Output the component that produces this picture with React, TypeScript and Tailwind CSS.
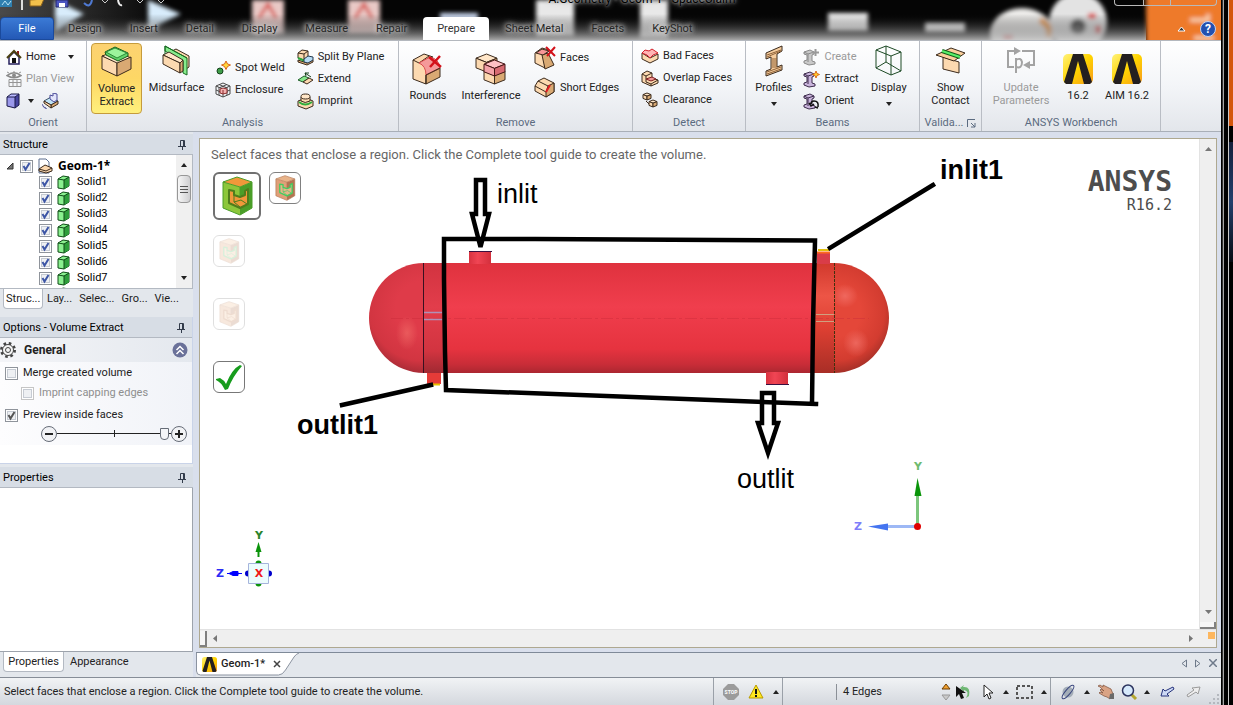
import { useState, type ReactNode } from 'react';

const TAN = '#fcd9b0';
const TAN_DARK = '#d9a973';
const INK = '#3b2a1c';

interface CubeProps {
  x?: number;
  y?: number;
  w: number;
  h: number;
  top?: string;
  left?: string;
  right?: string;
  stroke?: string;
}

// isometric block used by several ribbon icons
function Cube({ x = 0, y = 0, w, h, top = '#ffe6c8', left = TAN, right = TAN_DARK, stroke = INK }: CubeProps) {
  const q = w / 5;
  const m = x + w / 2;
  return (
    <g stroke={stroke} strokeLinejoin="round">
      <path d={`M${m} ${y}L${x + w} ${y + q}L${m} ${y + 2 * q}L${x} ${y + q}Z`} fill={top} />
      <path d={`M${x} ${y + q}L${m} ${y + 2 * q}V${y + h}L${x} ${y + h - q}Z`} fill={left} />
      <path d={`M${x + w} ${y + q}L${m} ${y + 2 * q}V${y + h}L${x + w} ${y + h - q}Z`} fill={right} />
    </g>
  );
}

function Svg({ w, h, children }: { w: number; h: number; children: ReactNode }) {
  return (
    <svg width={w} height={h} viewBox={`0 0 ${w} ${h}`} className="shrink-0" fill="none" aria-hidden="true">
      {children}
    </svg>
  );
}

function HomeIcon() {
  return (
    <Svg w={16} h={16}>
      <path d="M11 2h2v5h-2z" fill="#8c1c1c" />
      <path d="M3 8v7h10V8L8 3Z" fill="#fff" stroke="#26215e" strokeWidth="1.5" />
      <path d="M1 9L8 2l7 7" stroke="#4a4012" strokeWidth="2" />
      <path d="M6 9h4v5H6z" fill="#111" />
    </Svg>
  );
}

function PlanViewIcon() {
  return (
    <Svg w={16} h={16}>
      <path d="M1 4.500Q8-1 15 4.500Q8 9 1 4.500Z" stroke="#8a8a8a" strokeWidth="1.500" />
      <circle cx="8" cy="4.500" r="2" fill="#8a8a8a" />
      <path d="M3 8.500h12v7H3zM7 8v7M11 8v7M3 11.500h12M1 1l2 1M15 1l-2 1M8 0v1" stroke="#959595" />
    </Svg>
  );
}

function OrientCubeIcon() {
  return (
    <Svg w={14} h={16}>
      <path d="M1 4L5 1h8L9 4Z" fill="#b9b9ff" />
      <path d="M1 4h8v11L1 13Z" fill="#9a98ea" />
      <path d="M9 4l4-3v11l-4 3Z" fill="#45439e" />
      <path d="M1 4L5 1h8v11l-4 3-8-2ZM1 4h8v11M9 4l4-3" stroke="#1b1a4a" />
    </Svg>
  );
}

function SpinViewIcon() {
  return (
    <Svg w={17} h={16}>
      <path d="M2 8l7-4 7 4-7 4Z" fill="#bfe3f5" stroke="#3f556b" />
      <path d="M9 12l7-4v3l-7 4Z" fill={TAN_DARK} stroke={INK} />
      <path d="M2 8v2l7 5v-3Z" fill={TAN} stroke={INK} />
      <path d="M8 6V2l3 1V0l4 1v6l-3 2Z" fill="#e3e5fb" stroke="#4b4b99" />
      <path d="M0 11q1 4 5 5M1 13q2 2 3 2" stroke="#5b5da0" />
    </Svg>
  );
}

function VolumeExtractIcon() {
  return (
    <Svg w={32} h={32}>
      <g stroke={INK} strokeLinejoin="round">
        <path d="M1 10L15 5l15 7-14 6Z" fill="#ffe9cc" />
        <path d="M1 10l15 7v13L1 23Z" fill={TAN} />
        <path d="M30 11l-14 6v13l14-7Z" fill={TAN_DARK} />
      </g>
      <path d="M4 6L14 1l13 6v3l-10 5-12-6Z" fill="#63d56c" stroke="#155c1b" strokeLinejoin="round" />
      <path d="M5 6l9-4 12 5-10 5Z" fill="#9cf59c" stroke="#2c8a35" strokeLinejoin="round" />
    </Svg>
  );
}

function MidsurfaceIcon() {
  return (
    <Svg w={30} h={32}>
      <g stroke={INK} strokeLinejoin="round">
        <path d="M10 6l4-2 13 7v11l-3 2Z" fill={TAN} />
        <path d="M3 1l22 12v17l-4-2V16L3 6Z" fill="#86ec8c" stroke="#176a20" />
        <path d="M1 10l6-3 14 8-3 3Z" fill="#ffe6c8" />
        <path d="M1 10l17 8v10L1 19Z" fill={TAN} />
        <path d="M18 18l3-3v11l-3 2Z" fill={TAN_DARK} />
        <path d="M3 9V1l22 12" stroke="#176a20" />
      </g>
    </Svg>
  );
}

function SpotWeldIcon() {
  return (
    <Svg w={16} h={16}>
      <circle cx="5" cy="11" r="3" fill="#3f9d49" stroke="#14421a" />
      <path d="M11 1l1.500 3 3 1-3 1.500-1.500 3-1.500-3-3-1.500 3-1Z" fill="#ffd83a" stroke="#d8641c" />
    </Svg>
  );
}

function EnclosureIcon() {
  return (
    <Svg w={16} h={16}>
      <path d="M1 4l7-3 7 3v8l-7 3-7-3ZM1 4l7 3 7-3M8 7v8M4 2.500l7 3M12 2.500L5 5.500M4 5v8M12 5v8M1 8l7 3 7-3" stroke="#4a4a4a" />
      <path d="M5 7l3-1 4 1v4l-4 1-3-1Z" fill="#f3b1b1" stroke="#8c2f2f" />
      <path d="M8 8v4" stroke="#8c2f2f" />
    </Svg>
  );
}

function SplitIcon() {
  return (
    <Svg w={17} h={17}>
      <path d="M1 4l4-3 6 1v6l-4 3-6-2Z" fill={TAN} stroke={INK} />
      <path d="M1 4l6 1 4-3M7 5v5" stroke={INK} />
      <path d="M1 11l9 3 6-3v2l-6 3-9-3Z" fill={TAN_DARK} stroke={INK} />
      <path d="M1 9l7 3" stroke="#2ba43b" strokeWidth="2" />
      <path d="M7 10l4-3 5 1v3l-5 3-4-1Z" fill="#b8dcf4" stroke="#263b4f" />
    </Svg>
  );
}

function ExtendIcon() {
  return (
    <Svg w={17} h={16}>
      <path d="M1 9l6-4 5 2-6 4Z" fill="#86e78b" stroke="#215f2a" />
      <path d="M6 11l6-4 4 2-6 4Z" fill={TAN} stroke={INK} />
      <path d="M14 6L8 2m0 0h4M8 2l1 3" stroke="#17401c" />
    </Svg>
  );
}

function ImprintIcon() {
  return (
    <Svg w={17} h={17}>
      <path d="M1 8l8-3 7 3v5l-7 3-8-3Z" fill={TAN} stroke={INK} />
      <path d="M2 9q6 5 13 0" stroke="#2fae3e" strokeWidth="2" />
      <path d="M4 4v4q4 3 9 0V4" fill={TAN} stroke={INK} />
      <ellipse cx="8.500" cy="3.500" rx="4.500" ry="2.500" fill="#ffe6c8" stroke={INK} />
    </Svg>
  );
}

function RoundsIcon() {
  return (
    <Svg w={32} h={32}>
      <g stroke={INK} strokeLinejoin="round">
        <path d="M1 7l11-6 9 3-6 5-1 22L1 26Z" fill={TAN} />
        <path d="M1 7l6 3 10-7" />
        <path d="M14 31V22l14-7v9Z" fill={TAN_DARK} />
        <path d="M7 10q7 3 7 12l14-7Q27 6 18 4Z" fill="#f59a9a" stroke="#d84a4a" />
        <path d="M14 22v9M14 22l14-7" />
      </g>
      <path d="M17 4l12 10M28 3L18 14" stroke="#d3111a" strokeWidth="2.500" />
    </Svg>
  );
}

function InterferenceIcon() {
  return (
    <Svg w={32} h={32}>
      <Cube x={1} y={1} w={21} h={18} />
      <Cube x={9} y={14} w={21} h={17} />
      <Cube x={9} y={7} w={21} h={16} top="#ffc0c4" left="#f4a2a8" right="#d86a72" stroke="#451515" />
    </Svg>
  );
}

function FacesIcon() {
  return (
    <Svg w={22} h={24}>
      <g stroke={INK} strokeLinejoin="round">
        <path d="M1 7l7-5 7 2-5 6 1 12-10-5Z" fill={TAN} />
        <path d="M8 9l6-2 6 12-9 4Z" fill={TAN_DARK} />
        <path d="M2 7l6-4 7 2-6 4Z" fill="#f79797" />
      </g>
      <path d="M12 1l9 9M21 1l-8 9" stroke="#d3111a" strokeWidth="2" />
    </Svg>
  );
}

function ShortEdgesIcon() {
  return (
    <Svg w={22} h={22}>
      <g stroke={INK} strokeLinejoin="round">
        <path d="M1 9l3-5 6-3 10 5v9l-8 5-11-6Z" fill={TAN} />
        <path d="M12 15l2-6 6-3v9l-8 5Z" fill={TAN_DARK} />
        <path d="M1 9l11 6M4 4l10 5" />
      </g>
      <path d="M12 15l4-7" stroke="#e21b23" strokeWidth="2" />
    </Svg>
  );
}

function BadFacesIcon() {
  return (
    <Svg w={18} h={16}>
      <path d="M1 5l8 5 8-4v5l-8 4-8-4Z" fill={TAN} stroke={INK} />
      <path d="M1 5l3-3 4 1 3-2 6 4-5 2-3 3-3-3Z" fill="#ffb5b5" stroke="#d5202a" />
    </Svg>
  );
}

function OverlapIcon() {
  return (
    <Svg w={18} h={17}>
      <path d="M1 4l5-3 5 2v5l6 2v3l-7 3-9-4Z" fill={TAN} stroke={INK} />
      <path d="M1 4l4 2v6l5 2 7-4M5 6l6-3M10 14v2" stroke={INK} />
      <path d="M5 9l6-2 4 2-5 2Z" fill="#f19999" stroke="#802020" />
    </Svg>
  );
}

function ClearanceIcon() {
  return (
    <Svg w={18} h={16}>
      <Cube x={2} y={1} w={8} h={7} />
      <Cube x={8} y={8} w={8} h={7} />
      <path d="M5 9l3 3" stroke={INK} />
    </Svg>
  );
}

function ProfilesIcon() {
  return (
    <Svg w={20} h={32}>
      <path
        d="M2 8L18 1v5l-5 3v13l5-2v5L2 31v-5l5-2V12l-5 2Z"
        fill="#f6cd9e"
        stroke={INK}
        strokeLinejoin="round"
      />
      <path d="M3 10l14-5M3 12l14-6M8 14h5M8 16h5M8 18h5M8 20h5M8 22h5M3 27l14-5M3 29l14-5" stroke="#8f6238" />
    </Svg>
  );
}

function BeamIcon({ tone, mark }: { tone: string; mark: 'plus' | 'spark' | 'turn' }) {
  const edge = tone === '#c9c9c9' ? '#8a8a8a' : '#3c2b4b';
  return (
    <Svg w={17} h={17}>
      <path d="M1 3l6-2 4 2v2l-2 1v6l3 1v2l-6 1-5-2v-2l3-1V6L1 5Z" fill={tone} stroke={edge} strokeLinejoin="round" />
      <path d="M5 5v8M1 3l4 2 6-2" stroke={edge} />
      {mark === 'plus' && <path d="M12.500 0v7M9 3.500h7" stroke="#9a9a9a" strokeWidth="2" />}
      {mark === 'spark' && (
        <path d="M13 0l1 2.500 2.500 1-2.500 1-1 2.500-1-2.500-2.500-1 2.500-1Z" fill="#ffd02e" stroke="#db6b17" />
      )}
      {mark === 'turn' && <path d="M15 14q1-6-4-6-3 0-3 3m-2-1l2 3 3-2M15 15l-3-1" stroke="#111" strokeWidth="1.500" />}
    </Svg>
  );
}

function DisplayIcon() {
  return (
    <Svg w={28} h={32}>
      <path
        d="M1 5L11 1l15 6v19l-10 4L1 23ZM1 5l15 6 10-4M16 11v19M11 1v16L1 23M11 17l15 9"
        stroke="#1d4a25"
        strokeLinejoin="round"
      />
    </Svg>
  );
}

function ShowContactIcon() {
  return (
    <Svg w={32} h={28}>
      <g stroke={INK} strokeLinejoin="round">
        <path d="M8 10l16 5v11L8 22Z" fill={TAN} />
        <path d="M1 8l15-7 14 5-11 8Z" fill="#fbcf9c" />
      </g>
      <path d="M7 4l18 6" stroke="#135e1a" strokeWidth="4" />
      <path d="M7 4l18 6" stroke="#5af06a" strokeWidth="2" />
    </Svg>
  );
}

function UpdateIcon() {
  return (
    <Svg w={30} h={28}>
      <path d="M8 20H2V4h8M16 4h12v14h-6" stroke="#a3a3a3" strokeWidth="2" />
      <path d="M8 0l7 4-7 4ZM24 14v8l-7-4Z" fill="#a3a3a3" />
      <path d="M10 26V11M10 13q5-3 6 2 0 7-6 5" stroke="#a3a3a3" strokeWidth="2" />
    </Svg>
  );
}

function AnsysLogo({ size }: { size: number }) {
  return (
    <svg width={size} height={size} viewBox="0 0 30 30" className="shrink-0" aria-hidden="true">
      <defs>
        <linearGradient id="ansysGold" x1="0" y1="0" x2="1" y2="1">
          <stop offset="0" stopColor="#fff27a" />
          <stop offset="0.500" stopColor="#ffd400" />
          <stop offset="1" stopColor="#f79a1c" />
        </linearGradient>
      </defs>
      <rect width="30" height="30" rx="5" fill="url(#ansysGold)" />
      <path d="M10 0h10l9 28-2 2h-6L15 7 9 30H3l-2-2Z" fill="#231f20" />
    </svg>
  );
}

function Caret({ up = false }: { up?: boolean }) {
  return (
    <Svg w={6} h={4}>
      <path d={up ? 'M0 4h6L3 0Z' : 'M0 0h6L3 4Z'} fill="#222" />
    </Svg>
  );
}

interface SmallButtonProps {
  icon: ReactNode;
  label: string;
  caret?: boolean;
  disabled?: boolean;
}

function SmallButton({ icon, label, caret, disabled }: SmallButtonProps) {
  return (
    <button disabled={disabled} className="flex h-[22px] items-center gap-1 whitespace-nowrap disabled:text-[#9a9a9a]">
      {icon}
      <span>{label}</span>
      {caret && <span className="pl-2"><Caret /></span>}
    </button>
  );
}

interface LargeButtonProps {
  icon: ReactNode;
  label: string;
  caret?: boolean;
  disabled?: boolean;
  className?: string;
}

function LargeButton({ icon, label, caret, disabled, className = '' }: LargeButtonProps) {
  return (
    <button
      disabled={disabled}
      className={`flex flex-col items-center whitespace-pre-line leading-[13px] disabled:text-[#9a9a9a] ${className}`}
    >
      <span className="flex h-9 items-center">{icon}</span>
      <span className="pt-[2px]">{label}</span>
      {caret && <span className="pt-2"><Caret /></span>}
    </button>
  );
}

function RibbonGroup({ title, width, launcher, children }: { title: string; width: string; launcher?: boolean; children: ReactNode }) {
  return (
    <section className={`flex shrink-0 flex-col border-r border-[#b9bdc4] ${width}`}>
      <div className="flex h-[74px] pt-[2px]">{children}</div>
      <div className="flex items-center justify-center gap-1 pt-px text-[#5b6b80]">
        {title}
        {launcher && (
          <button aria-label="Validation options">
            <Svg w={9} h={9}>
              <path d="M0.500 8V0.500H8M4 4l4 4M8 4v4H4" stroke="#5b6b80" />
            </Svg>
          </button>
        )}
      </div>
    </section>
  );
}

function Ribbon() {
  return (
    <div className="flex h-[91px] border-b border-[#a9afb8] bg-gradient-to-b from-white via-[#f3f5f8] to-[#e3e6eb]">
      <RibbonGroup title="Orient" width="w-[87px]">
        <div className="pt-[3px] pl-[6px]">
          <SmallButton icon={<HomeIcon />} label="Home" caret />
          <SmallButton icon={<PlanViewIcon />} label="Plan View" disabled />
          <div className="flex h-[22px] items-center gap-2">
            <button aria-label="Orient view" className="flex items-center gap-2">
              <OrientCubeIcon />
              <Caret />
            </button>
            <button aria-label="Spin view"><SpinViewIcon /></button>
          </div>
        </div>
      </RibbonGroup>

      <RibbonGroup title="Analysis" width="w-[312px]">
        <LargeButton
          icon={<VolumeExtractIcon />}
          label={'Volume\nExtract'}
          className="ml-1 h-[71px] w-[51px] rounded-sm border border-[#c59b3c] bg-gradient-to-b from-[#fcd271] via-[#fdd765] to-[#fff07d]"
        />
        <LargeButton icon={<MidsurfaceIcon />} label="Midsurface" className="w-[69px]" />
        <div className="pt-[14px] pl-1">
          <SmallButton icon={<SpotWeldIcon />} label="Spot Weld" />
          <SmallButton icon={<EnclosureIcon />} label="Enclosure" />
        </div>
        <div className="pt-[3px] pl-3">
          <SmallButton icon={<SplitIcon />} label="Split By Plane" />
          <SmallButton icon={<ExtendIcon />} label="Extend" />
          <SmallButton icon={<ImprintIcon />} label="Imprint" />
        </div>
      </RibbonGroup>

      <RibbonGroup title="Remove" width="w-[234px]">
        <LargeButton icon={<RoundsIcon />} label="Rounds" className="w-[58px] pt-2" />
        <LargeButton icon={<InterferenceIcon />} label="Interference" className="w-[68px] pt-2" />
        <div className="flex flex-col gap-2 pt-1 pl-[9px]">
          <SmallButton icon={<FacesIcon />} label="Faces" />
          <SmallButton icon={<ShortEdgesIcon />} label="Short Edges" />
        </div>
      </RibbonGroup>

      <RibbonGroup title="Detect" width="w-[113px]">
        <div className="flex flex-col pt-[2px] pl-2">
          <SmallButton icon={<BadFacesIcon />} label="Bad Faces" />
          <SmallButton icon={<OverlapIcon />} label="Overlap Faces" />
          <SmallButton icon={<ClearanceIcon />} label="Clearance" />
        </div>
      </RibbonGroup>

      <RibbonGroup title="Beams" width="w-[174px]">
        <LargeButton icon={<ProfilesIcon />} label="Profiles" caret className="w-[57px]" />
        <div className="pt-[3px] pl-[2px]">
          <SmallButton icon={<BeamIcon tone="#c9c9c9" mark="plus" />} label="Create" disabled />
          <SmallButton icon={<BeamIcon tone="#c9b4dc" mark="spark" />} label="Extract" />
          <SmallButton icon={<BeamIcon tone="#c9b4dc" mark="turn" />} label="Orient" />
        </div>
        <LargeButton icon={<DisplayIcon />} label="Display" caret className="w-[62px]" />
      </RibbonGroup>

      <RibbonGroup title="Valida..." width="w-[62px]" launcher>
        <LargeButton icon={<ShowContactIcon />} label={'Show\nContact'} className="w-full" />
      </RibbonGroup>

      <RibbonGroup title="ANSYS Workbench" width="w-[179px]">
        <LargeButton icon={<UpdateIcon />} label={'Update\nParameters'} disabled className="w-[78px]" />
        <LargeButton icon={<AnsysLogo size={30} />} label="16.2" className="w-[36px] pt-2" />
        <LargeButton icon={<AnsysLogo size={30} />} label="AIM 16.2" className="w-[62px] pt-2" />
      </RibbonGroup>
    </div>
  );
}

// blurred desktop showing through the glass title bar
function GlassBackdrop() {
  return (
    <svg className="absolute inset-0 h-full w-full" aria-hidden="true">
      <defs>
        <linearGradient id="glass" x1="0" y1="0" x2="0" y2="1">
          <stop offset="0.350" stopColor="#0a0a0a" stopOpacity="0" />
          <stop offset="1" stopColor="#c4c4c4" stopOpacity="0.850" />
        </linearGradient>
        <linearGradient id="glassLeft" x1="0" y1="0" x2="1" y2="0">
          <stop offset="0" stopColor="#4a4a4a" />
          <stop offset="1" stopColor="#080808" />
        </linearGradient>
        <filter id="soft"><feGaussianBlur stdDeviation="2" /></filter>
      </defs>
      <rect width="100%" height="100%" fill="#050505" />
      <rect width="160" height="40" fill="url(#glassLeft)" />
      <g filter="url(#soft)">
        <path d="M55 0L84 14 55 32Z" fill="#d8ecfb" />
        <path d="M148 0l33 14-33 16Z" fill="#d8ecfb" />
        <path d="M252 0h32v34h-32ZM348 0h32v34h-32Z" fill="#e9c9c6" />
        <path d="M259 18l9-14 8 14M355 18l9-14 8 14" stroke="#d64b45" strokeWidth="3" fill="none" />
        <path d="M536 0h38v36h-38ZM640 0h28v38h-28Z" fill="#e8e8e8" />
        <path d="M440 13h38v8h-38Z" fill="#cbd8f0" />
        <path d="M828 13h40v18h-40ZM925 23h40v9h-40Z" fill="#f2f2f2" />
        <ellipse cx="1022" cy="34" rx="32" ry="26" fill="#ecebe9" />
        <circle cx="1078" cy="22" r="29" fill="#e3e3e3" />
        <circle cx="1078" cy="27" r="8" fill="#555" />
        <path d="M1003 38h10M1088 16h8M1098 26v8" stroke="#e0484a" strokeWidth="5" />
        <path d="M1040 20q12 6 8 18" stroke="#f0a860" strokeWidth="6" fill="none" />
        <rect x="1146" y="-5" width="90" height="55" fill="#ee7a2c" />
        <path d="M1190 20h18v-6M1194 38h20" stroke="#f8cba8" strokeWidth="4" fill="none" />
      </g>
      <rect width="1146" height="100%" fill="url(#glass)" />
    </svg>
  );
}

const tabs = ['Design', 'Insert', 'Detail', 'Display', 'Measure', 'Repair', 'Prepare', 'Sheet Metal', 'Facets', 'KeyShot'];

function TitleBar() {
  return (
    <header className="relative flex h-[41px] flex-col justify-between overflow-hidden border-b border-[#b4b8be]">
      <GlassBackdrop />
      <div className="relative flex h-[10px] items-end justify-between overflow-hidden">
        <Svg w={170} h={10}>
          <path d="M0 0h12v7H0Z" fill="#2f7fae" />
          <path d="M2 5l3-4 3 4 3-4" stroke="#b8e4f5" />
          <path d="M22 0v10" stroke="#ddd" strokeWidth="2" />
          <path d="M30 0l14-1-3 7H30Z" fill="#f3c04b" stroke="#8a611c" />
          <path d="M56 0h12v7H56Z" fill="#4a55c0" stroke="#25296b" />
          <path d="M59 3h6v4h-6Z" fill="#fff" />
          <path d="M84 3q6 6 8-3" stroke="#4f79d1" strokeWidth="2" />
          <path d="M118 0q1 6 4 5" stroke="#eee" strokeWidth="2" />
          <path d="M102 0l3 3 3-3M137 0l3 3 3-3M158 0l3 3 3-3" stroke="#ccc" />
        </Svg>
        <span className="h-[19px] flex-1 text-center text-[12px] text-black [text-shadow:0_0_3px_#ddd,0_0_6px_#bbb]">
          A:Geometry - Geom-1 - SpaceClaim
        </span>
        <div className="mr-1 flex h-[6px] w-[103px] self-start rounded-b border border-t-0 border-[#b9b9b9]">
          <span className="w-[29px] border-r border-[#b9b9b9]" />
          <span className="w-[27px] border-r border-[#b9b9b9]" />
        </div>
      </div>
      <nav className="relative flex h-[23px] items-end">
        <button className="h-full w-[54px] rounded-t-sm border border-[#1b4a9c] bg-gradient-to-b from-[#3b7ad5] to-[#2459b6] text-white">
          File
        </button>
        {tabs.map((tab) => (
          <button
            key={tab}
            className={
              tab === 'Prepare'
                ? 'mx-[2px] h-full rounded-t-sm bg-white px-[14px] text-[#333]'
                : 'h-full px-[14px] text-[#262626] [text-shadow:0_0_4px_#ddd,0_0_6px_#ccc,0_0_9px_#bbb]'
            }
          >
            {tab}
          </button>
        ))}
        <div className="ml-auto flex h-full items-center gap-[14px] pr-[5px]">
          <button aria-label="Minimize ribbon">
            <Svg w={9} h={6}><path d="M1 5l3.500-4L8 5Z" fill="#333" stroke="#fff" /></Svg>
          </button>
          <button aria-label="Help" className="h-4 w-4 rounded-full border border-[#c3d2f0] bg-[#2350b0] text-[12px] leading-[14px] font-bold text-white">
            ?
          </button>
        </div>
      </nav>
    </header>
  );
}

function PanelHeader({ title }: { title: string }) {
  return (
    <div className="flex h-[21px] shrink-0 items-center justify-between border-b border-[#b3b9c2] bg-[#d7dde5] px-[3px] pt-px text-black">
      {title}
      <button aria-label={`Pin ${title}`} className="pr-1">
        <Svg w={8} h={10}>
          <path d="M2.500 6V0.500h4V6M5.500 1v5M0 6.500h8M4.500 7v3" stroke="#333c4b" />
        </Svg>
      </button>
    </div>
  );
}

interface CheckBoxProps {
  id: string;
  defaultChecked?: boolean;
  disabled?: boolean;
  color?: string;
}

function CheckBox({ id, defaultChecked = false, disabled, color = '#3c55a5' }: CheckBoxProps) {
  const [on, setOn] = useState(defaultChecked);
  return (
    <span className="grid h-[13px] w-[13px] shrink-0">
      <input
        id={id}
        type="checkbox"
        checked={on}
        disabled={disabled}
        onChange={() => setOn(!on)}
        className="col-start-1 row-start-1 h-[13px] w-[13px] appearance-none border border-[#8f949b] bg-[#eef0f3] shadow-[inset_0_0_0_1px_#fff,inset_0_0_0_2px_#c6cbd3] disabled:border-[#c5c5c5]"
      />
      {on && (
        <svg viewBox="0 0 13 13" className="pointer-events-none col-start-1 row-start-1" aria-hidden="true">
          <path d="M3.500 6l2 3.500L9.500 3" fill="none" stroke={color} strokeWidth="2" />
        </svg>
      )}
    </span>
  );
}

function SolidIcon() {
  return (
    <Svg w={14} h={15}>
      <path d="M1 4l5-3 6 1v9l-5 3-6-1Z" fill="#8af08f" stroke="#0f4b17" strokeLinejoin="round" />
      <path d="M7 5l5-3v9l-5 3Z" fill="#2e9e3b" />
      <path d="M1 4l6 1v9M7 5l5-3" stroke="#0f4b17" />
    </Svg>
  );
}

const solids = ['Solid1', 'Solid2', 'Solid3', 'Solid4', 'Solid5', 'Solid6', 'Solid7'];

function StructurePanel() {
  return (
    <section className="flex h-[176px] shrink-0 flex-col">
      <PanelHeader title="Structure" />
      <div className="flex h-[134px] border-r border-b border-[#b3b9c2] bg-white text-black">
        <ul className="flex-1 overflow-hidden pt-[3px]">
          <li className="flex h-4 items-center pl-[6px]">
            <Svg w={9} h={9}><path d="M7 1v6H1Z" fill="#777" stroke="#333" /></Svg>
            <span className="pr-1 pl-[5px]"><CheckBox id="geom" defaultChecked /></span>
            <Svg w={16} h={16}>
              <path d="M2 1h7l3 3v11H2Z" fill="#fff" stroke="#5c6f8f" />
              <path d="M2 11l6-4 7 3v3l-6 2-7-2Z" fill={TAN} stroke={INK} />
              <path d="M2 11l7 2 6-3" stroke={INK} />
            </Svg>
            <label htmlFor="geom" className="pl-[5px] font-['Noto_Sans',sans-serif] text-[12px] font-bold">Geom-1*</label>
          </li>
          {solids.map((name) => (
            <li key={name} className="flex h-4 items-center pl-[39px]">
              <CheckBox id={name} defaultChecked />
              <span className="pr-[6px] pl-[5px]"><SolidIcon /></span>
              <label htmlFor={name}>{name}</label>
            </li>
          ))}
          <li className="flex h-4 items-center pl-[39px]" aria-label="More solids">
            <CheckBox id="more" />
            <span className="pl-[5px]"><SolidIcon /></span>
          </li>
        </ul>
        <div className="flex w-4 flex-col items-center bg-[#f0f0f0] py-2">
          <Caret up />
          <div className="mt-2 flex h-[28px] w-[14px] flex-col items-center justify-center gap-[2px] rounded-sm border border-[#979797] bg-gradient-to-r from-[#f7f7f7] to-[#cfcfd1]">
            <span className="h-px w-2 bg-[#555]" />
            <span className="h-px w-2 bg-[#555]" />
            <span className="h-px w-2 bg-[#555]" />
          </div>
          <span className="mt-auto"><Caret /></span>
        </div>
      </div>
      <div className="flex h-[21px] items-start px-[3px]">
        <button className="h-5 w-10 rounded-b border border-t-0 border-[#b3b9c2] bg-white pl-[2px] text-left">Struc...</button>
        <button className="h-5 pl-1">Lay...</button>
        <button className="h-5 pl-[7px]">Selec...</button>
        <button className="h-5 pl-[7px]">Gro...</button>
        <button className="h-5 pl-[7px]">Vie...</button>
      </div>
    </section>
  );
}

function OptionsPanel() {
  const [depth, setDepth] = useState(98);
  return (
    <section className="mt-[7px] flex h-[147px] shrink-0 flex-col border-r border-b border-[#c9d3e8] bg-white">
      <PanelHeader title="Options - Volume Extract" />
      <div className="h-[107px] bg-gradient-to-r from-[#fdfdfe] to-[#f1f3f8]">
        <div className="flex h-6 items-center bg-gradient-to-r from-[#f4f5f8] to-[#e4e8ee] pr-1">
          <Svg w={17} h={17}>
            <circle cx="8" cy="8" r="6.500" stroke="#444" strokeWidth="3" strokeDasharray="2.500 2.600" />
            <circle cx="8" cy="8" r="5.500" fill="#f4f4f4" stroke="#444" />
            <circle cx="8" cy="8" r="2.500" stroke="#444" />
          </Svg>
          <h2 className="flex-1 pl-[7px] text-[12px] font-bold">General</h2>
          <button aria-label="Collapse General">
            <Svg w={16} h={16}>
              <circle cx="8" cy="8" r="7.500" fill="#6a7199" />
              <path d="M4.500 8L8 4.500 11.500 8M4.500 12L8 8.500l3.500 3.500" stroke="#fff" strokeWidth="1.500" />
            </Svg>
          </button>
        </div>
        <div className="flex h-[22px] items-center gap-[5px] pl-[5px]">
          <CheckBox id="merge" />
          <label htmlFor="merge">Merge created volume</label>
        </div>
        <div className="flex h-[18px] items-center gap-[5px] pl-[21px]">
          <CheckBox id="capping" disabled />
          <label htmlFor="capping" className="text-[#8e8e8e]">Imprint capping edges</label>
        </div>
        <div className="flex h-[26px] items-center gap-[5px] pl-[5px]">
          <CheckBox id="preview" defaultChecked color="#555" />
          <label htmlFor="preview">Preview inside faces</label>
        </div>
        <div className="flex h-3 items-center pr-[5px] pl-[41px]">
          <button aria-label="Decrease" onClick={() => setDepth(Math.max(0, depth - 5))}>
            <Svg w={16} h={16}>
              <circle cx="8" cy="8" r="7.500" fill="#f1f2f5" stroke="#666c77" />
              <path d="M4 8h8" stroke="#222" strokeWidth="2" />
            </Svg>
          </button>
          <div className="relative flex h-4 flex-1 items-center">
            <span className="absolute inset-x-0 top-[7px] h-px bg-[#222]" />
            <span className="absolute top-1 left-1/2 h-[7px] w-px bg-[#222]" />
            <input
              type="range"
              aria-label="Preview position"
              value={depth}
              onChange={(e) => setDepth(Number(e.target.value))}
              className="relative w-full appearance-none bg-transparent [&::-webkit-slider-thumb]:h-3 [&::-webkit-slider-thumb]:w-[9px] [&::-webkit-slider-thumb]:appearance-none [&::-webkit-slider-thumb]:rounded-b-[4px] [&::-webkit-slider-thumb]:border [&::-webkit-slider-thumb]:border-[#666c77] [&::-webkit-slider-thumb]:bg-[#f4f5f8]"
            />
          </div>
          <button aria-label="Increase" onClick={() => setDepth(Math.min(100, depth + 5))}>
            <Svg w={16} h={16}>
              <circle cx="8" cy="8" r="7.500" fill="#f1f2f5" stroke="#666c77" />
              <path d="M4 8h8M8 4v8" stroke="#222" strokeWidth="2" />
            </Svg>
          </button>
        </div>
      </div>
    </section>
  );
}

function PropertiesPanel() {
  return (
    <section className="mt-[3px] flex flex-1 flex-col">
      <PanelHeader title="Properties" />
      <div className="flex-1 border-r border-b border-[#9da3ac] bg-white" />
      <div className="flex h-[25px] items-start px-[3px]">
        <button className="h-5 w-[61px] rounded-b border border-t-0 border-[#b3b9c2] bg-white">Properties</button>
        <button className="h-5 pl-[6px]">Appearance</button>
      </div>
    </section>
  );
}

// isometric block with its front corner cut away, drawn on the tool guide buttons
function GuideIcon({ size, shell, dark, rim, cavity = '#f0983a' }: { size: number; shell: string; dark: string; rim: string; cavity?: string }) {
  return (
    <svg width={size} height={size} viewBox="0 0 38 40" aria-hidden="true">
      <path d="M5 6l17 5v28L5 32Z" fill={shell} />
      <path d="M22 11l12-5v26l-12 7Z" fill={dark} />
      <path d="M5 6l14-5 15 5-12 5Z" fill={cavity} />
      <path d="M11 14l5 1v4l6 2 5-2v-4l3-2v15l-8 4-11-5Z" fill={cavity} stroke={rim} strokeWidth="2" strokeLinejoin="round" />
      <path d="M16 19v7l6 5M16 26l7-2 6 4" fill="none" stroke={rim} />
      <path d="M5 6l14-5 15 5v26l-12 7-17-7ZM5 6l17 5 12-5M22 11v9" fill="none" stroke={dark} />
    </svg>
  );
}

function ToolGuide() {
  const guide = 'grid place-items-center rounded-md bg-white';
  return (
    <div className="absolute top-[33px] left-[13px] flex gap-2">
      <div className="flex flex-col items-start">
        <button aria-label="Select faces" className={`${guide} h-[48px] w-[48px] border-2 border-[#707070]`}>
          <GuideIcon size={40} shell="#8cc63a" dark="#4a9e28" rim="#4f7d1c" />
        </button>
        <button aria-label="Select seed face" disabled className={`${guide} mt-[15px] h-8 w-8 border border-[#999] opacity-30`}>
          <GuideIcon size={26} shell="#e6b490" dark="#c08e70" rim="#7ccf8a" cavity="#f2cba8" />
        </button>
        <button aria-label="Select vector" disabled className={`${guide} mt-[31px] h-8 w-8 border border-[#999] opacity-30`}>
          <GuideIcon size={26} shell="#e6b490" dark="#c08e70" rim="#c98f68" cavity="#f2cba8" />
        </button>
        <button aria-label="Complete" className={`${guide} mt-[31px] h-8 w-8 border border-[#777]`}>
          <Svg w={28} h={28}>
            <path d="M1 16l4-1q4 2 6 6Q17 6 25 2l2 1Q18 13 13 26l-3 1Q6 19 1 17Z" fill="#179c1d" />
          </Svg>
        </button>
      </div>
      <button aria-label="Select edges" className={`${guide} h-8 w-8 border border-[#808080]`}>
        <GuideIcon size={26} shell="#e0a078" dark="#b37552" rim="#3fce60" cavity="#e9b48a" />
      </button>
    </div>
  );
}

function Model() {
  return (
    <svg className="absolute top-0 left-0 h-[489px] w-[998px]" viewBox="200 139 998 489" fill="none">
      <defs>
        <linearGradient id="hull" x1="0" y1="0" x2="0" y2="1">
          <stop offset="0" stopColor="#df323e" />
          <stop offset="0.400" stopColor="#f03e4d" />
          <stop offset="0.780" stopColor="#e6333f" />
          <stop offset="0.920" stopColor="#c92d38" />
          <stop offset="1" stopColor="#ab2730" />
        </linearGradient>
        <linearGradient id="collarLeft" x1="0" y1="0" x2="0" y2="1">
          <stop offset="0" stopColor="#d23340" />
          <stop offset="0.400" stopColor="#e23d4b" />
          <stop offset="0.800" stopColor="#d23440" />
          <stop offset="1" stopColor="#a02932" />
        </linearGradient>
        <linearGradient id="collarRight" x1="0" y1="0" x2="0" y2="1">
          <stop offset="0" stopColor="#d1392d" />
          <stop offset="0.300" stopColor="#ed5546" />
          <stop offset="0.600" stopColor="#dd3f32" />
          <stop offset="1" stopColor="#a82e26" />
        </linearGradient>
        <radialGradient id="domeLeft" gradientUnits="userSpaceOnUse" cx="422" cy="308" r="66">
          <stop offset="0.400" stopColor="#df3b49" />
          <stop offset="0.800" stopColor="#d23541" />
          <stop offset="1" stopColor="#a62b35" />
        </radialGradient>
        <radialGradient id="domeRight" gradientUnits="userSpaceOnUse" cx="836" cy="312" r="62">
          <stop offset="0.400" stopColor="#e44739" />
          <stop offset="0.780" stopColor="#d33c30" />
          <stop offset="1" stopColor="#a02e26" />
        </radialGradient>
        <radialGradient id="shine">
          <stop offset="0" stopColor="#f4746c" stopOpacity="0.900" />
          <stop offset="1" stopColor="#f4746c" stopOpacity="0" />
        </radialGradient>
        <linearGradient id="nozzle" x1="0" y1="0" x2="1" y2="0">
          <stop offset="0" stopColor="#d93240" />
          <stop offset="0.400" stopColor="#f04554" />
          <stop offset="1" stopColor="#d32f3c" />
        </linearGradient>
      </defs>

      <path d="M424 263A55 55 0 0 0 424 373Z" fill="url(#domeLeft)" />
      <path d="M834 263A55 55 0 0 1 834 373Z" fill="url(#domeRight)" />
      <ellipse cx="407" cy="333" rx="11" ry="17" fill="url(#shine)" opacity="0.600" />
      <ellipse cx="845" cy="296" rx="13" ry="12" fill="url(#shine)" opacity="0.800" />
      <ellipse cx="856" cy="343" rx="13" ry="14" fill="url(#shine)" opacity="0.800" />
      <rect x="424" y="263" width="21" height="110" fill="url(#collarLeft)" />
      <rect x="814" y="263" width="20" height="110" fill="url(#collarRight)" />
      <rect x="444" y="263" width="371" height="110" fill="url(#hull)" />
      <path d="M391 318.500h478" stroke="#c92b3a" strokeDasharray="12 3 3 3" opacity="0.400" />
      <path d="M423.500 263v110" stroke="#3a1020" />
      <path d="M834.500 263v110" stroke="#42300e" strokeDasharray="3 1" />
      <path d="M424 312.500h18M424 319.500h18" stroke="#b18fb6" strokeWidth="1.500" />
      <path d="M816 314.500h18M816 321.500h18" stroke="#cfa080" />

      <path d="M469 252h22v12h-22Z" fill="url(#nozzle)" />
      <path d="M469 251.500h23M766 384.500h23" stroke="#3a1040" />
      <path d="M766 372h22v12h-22Z" fill="url(#nozzle)" />
      <path d="M817 252h13v12h-13Z" fill="#d93c48" />
      <path d="M817 252.500h13" stroke="#ff6a1c" strokeWidth="2" />
      <path d="M818 250h11" stroke="#e0c010" strokeWidth="2" />
      <path d="M427 373h14v11h-14Z" fill="#e53b38" />
      <path d="M429 384.500h11" stroke="#e6c000" strokeWidth="2" />

      <g stroke="#000" strokeWidth="4.500" strokeLinecap="square">
        <path d="M444 239l91 0 280 1.500M444 239v40l1 73 1 38 370 14M815 241l-2 83-1 80" />
        <path d="M476 180h9v34h4l-8.500 33-8.500-33h4Z" />
        <path d="M762 393h12v30h4l-10 30-10-30h4Z" />
        <path d="M830 248L933 185M342 405l89-20" />
      </g>

      <g fill="#000" className="font-['Liberation_Sans',Arial,sans-serif] text-[27px]">
        <text x="497" y="203">inlit</text>
        <text x="737" y="488">outlit</text>
        <text x="940" y="179" fontWeight="700">inlit1</text>
        <text x="297" y="434" fontWeight="700">outlit1</text>
      </g>

      {/* world origin */}
      <path d="M917.500 526V494" stroke="#7cc67c" strokeWidth="3" />
      <path d="M917.500 478l4 18h-7Z" fill="#0a950a" />
      <path d="M917 526.500h-30" stroke="#9db8f5" strokeWidth="3" />
      <path d="M868 526.500l20-3v7Z" fill="#4474f0" />
      <circle cx="917.500" cy="526.500" r="3.500" fill="#e00000" />

      {/* view triad */}
      <path d="M258.500 557v-9" stroke="#0b930b" strokeWidth="2" />
      <path d="M258.500 542l3 10h-6Z" fill="#0b930b" />
      <path d="M227 573.500h15" stroke="#00f" />
      <path d="M229 573.500l4-2h5v4h-5Z" fill="#00f" stroke="#00f" />
      <circle cx="258.500" cy="563.500" r="3" fill="#0b930b" />
      <circle cx="258.500" cy="583.500" r="3" fill="#0b930b" />
      <circle cx="248" cy="573.500" r="3" fill="#00c" />
      <circle cx="269" cy="573.500" r="3" fill="#00c" />
      <path d="M248.500 563.500h20v20h-20Z" fill="#ecfcfd" stroke="#a6b4dc" />
      <g className="font-['DejaVu_Sans',sans-serif] text-[11px]" fontWeight="700" textAnchor="middle">
        <text x="918" y="470" fill="#6fbb6f">Y</text>
        <text x="858" y="530" fill="#7d7dfa">Z</text>
        <text x="259" y="539" fill="#2b842b">Y</text>
        <text x="220" y="577" fill="#2c2cf5">Z</text>
        <text x="259" y="577" fill="#f01818">X</text>
      </g>
    </svg>
  );
}

function Viewport() {
  return (
    <div className="flex flex-1 flex-col border border-[#aea890] bg-[#efefef]">
      <div className="flex flex-1">
        <div className="relative flex-1 overflow-hidden bg-white">
          <p className="pt-2 pl-[11px] text-[13px] leading-4 text-[#666]">
            Select faces that enclose a region. Click the Complete tool guide to create the volume.
          </p>
          <Model />
          <ToolGuide />
          <div className="absolute top-[28px] right-[27px] flex flex-col items-end font-['DejaVu_Sans_Mono',monospace] text-[#4d4d4d]">
            <span className="text-[28px] leading-[30px] font-bold">ANSYS</span>
            <span className="text-[15px] leading-4">R16.2</span>
          </div>
        </div>
        <div className="flex w-[17px] flex-col items-center justify-between border-l border-[#e3e3e3] bg-[#efefef] pt-2">
          <Svg w={7} h={4}><path d="M0 4h7L3.500 0Z" fill="#777" /></Svg>
          <div className="flex w-full flex-col items-center">
            <Svg w={7} h={4}><path d="M0 0h7L3.500 4Z" fill="#777" /></Svg>
            <span className="mt-2 h-[7px] w-full border-r-2 border-b-2 border-[#808080] bg-[#f6f6f6]" />
          </div>
        </div>
      </div>
      <div className="flex h-[18px] items-center border-t border-[#e2e2e2]">
        <span className="h-4 w-[7px] border-r-2 border-b-2 border-[#808080] bg-[#f6f6f6]" />
        <span className="pl-[6px]"><Svg w={4} h={7}><path d="M4 0v7L0 3.500Z" fill="#777" /></Svg></span>
        <span className="ml-auto pr-[10px]"><Svg w={4} h={7}><path d="M0 0v7l4-3.500Z" fill="#777" /></Svg></span>
        <span className="mr-[1px] mb-[6px] ml-[5px] h-[7px] w-[7px] bg-[#fdb75f]" />
      </div>
    </div>
  );
}

function DocumentTabs() {
  return (
    <div className="mt-1 flex h-[25px] items-start justify-between border-t border-[#7f8a98] bg-[#e3e7ec]">
      <div className="relative flex h-[22px] w-[104px] items-center">
        <svg className="absolute inset-0" width="104" height="23" viewBox="0 0 104 23" aria-hidden="true">
          <path d="M0.500 0v18q0 4 4 4h78q4 0 7-5L98 4q2-3 5-4" fill="#fff" stroke="#8b93a0" />
        </svg>
        <button className="relative flex items-center gap-1 pl-[6px] font-medium">
          <AnsysLogo size={15} />
          Geom-1*
        </button>
        <button aria-label="Close tab" className="relative pl-2">
          <Svg w={8} h={8}><path d="M1 1l6 6M7 1L1 7" stroke="#444" strokeWidth="1.500" /></Svg>
        </button>
      </div>
      <div className="flex h-[20px] items-center gap-2 pr-[4px]">
        <button aria-label="Previous tab"><Svg w={6} h={9}><path d="M5.500 1v7L1 4.500Z" stroke="#6e7a8a" /></Svg></button>
        <button aria-label="Next tab"><Svg w={6} h={9}><path d="M0.500 1v7L5 4.500Z" stroke="#6e7a8a" /></Svg></button>
        <button aria-label="Close"><Svg w={8} h={8}><path d="M0 0l8 8M8 0L0 8" stroke="#6e7a8a" strokeWidth="1.500" /></Svg></button>
      </div>
    </div>
  );
}

function StatusBar() {
  return (
    <footer className="flex h-[28px] shrink-0 items-stretch border-t border-[#868d97] bg-gradient-to-b from-[#f1f3f5] to-[#d4d8de]">
      <p className="flex flex-1 items-center pt-px pl-1">
        Select faces that enclose a region. Click the Complete tool guide to create the volume.
      </p>
      <div className="flex w-[69px] items-center border-l border-[#9aa0a8] pl-[9px]">
        <button aria-label="Stop">
          <svg width="16" height="16" viewBox="0 0 16 16" aria-hidden="true">
            <path d="M5 0h6l5 5v6l-5 5H5l-5-5V5Z" fill="#9b9b9b" />
            <text x="8" y="10" fontSize="5" fontWeight="700" fill="#fff" textAnchor="middle">STOP</text>
          </svg>
        </button>
        <button aria-label="Warnings" className="flex items-center gap-[9px] pl-[9px]">
          <Svg w={16} h={15}>
            <path d="M8 1l7 13H1Z" fill="#ffe81f" stroke="#b89b00" strokeLinejoin="round" />
            <path d="M8 5v5M8 11v2" stroke="#111" strokeWidth="2" />
          </Svg>
          <Caret up />
        </button>
      </div>
      <div className="flex w-[268px] items-center border-l border-[#9aa0a8] pl-[53px]">
        <span className="h-4 border-l border-[#8b9097] pl-[6px] leading-4">4 Edges</span>
        <div className="ml-auto flex items-center pr-[3px]">
          <button aria-label="Selection filter">
            <Svg w={10} h={18}>
              <path d="M1 6h8L5 1Z" fill="#f0a030" stroke="#6b3c00" />
              <path d="M1 12h8l-4 5Z" fill="#c9c9c9" stroke="#999" />
            </Svg>
          </button>
          <button aria-label="Revert selection" className="pl-1">
            <Svg w={16} h={16}>
              <path d="M8 3q8-1 6 9l-3 2q4-7-2-8v2L5 4l4-3Z" fill="#6fb874" />
              <path d="M1 2v11l3-3 2 5 3-1-2-5h4Z" fill="#111" />
            </Svg>
          </button>
          <button aria-label="Select" className="flex items-center gap-2 pl-[12px]">
            <Svg w={12} h={16}>
              <path d="M1 1v12l3-3 2 5 2-1-2-5h4Z" fill="#fff" stroke="#222" />
            </Svg>
            <Caret up />
          </button>
          <button aria-label="Box select" className="flex items-center gap-2 pl-[7px]">
            <Svg w={17} h={14}><path d="M1 1h15v12H1Z" stroke="#555" strokeWidth="2" strokeDasharray="3 2" /></Svg>
            <Caret up />
          </button>
        </div>
      </div>
      <div className="relative flex w-[171px] items-center border-l border-[#9aa0a8] pl-[9px]">
        <button aria-label="Spin" className="flex items-center gap-2">
          <Svg w={16} h={16}>
            <circle cx="8" cy="8" r="5.500" fill="#a3adb8" />
            <ellipse cx="8" cy="8" rx="8.500" ry="2.500" transform="rotate(-50 8 8)" stroke="#37437c" />
          </Svg>
          <Caret up />
        </button>
        <button aria-label="Pan" className="pl-2">
          <Svg w={16} h={16}>
            <path d="M0 2l2-1 3 2 0-2 8 4 2 5-3 5-3-2-3-1-5-3 1-1 3 1-3-3 1-1 3 2-4-4Z" fill="#d9a385" stroke="#7c4f3a" strokeWidth="0.700" />
            <path d="M11 15l1-5 4-1v6Z" fill="#6a6a6a" />
          </Svg>
        </button>
        <button aria-label="Zoom" className="flex items-center gap-[6px] pl-[7px]">
          <Svg w={17} h={16}>
            <path d="M10 10l5 5" stroke="#b3a62e" strokeWidth="3" />
            <circle cx="7" cy="6.500" r="5.500" fill="#d6e9fb" stroke="#2b335e" strokeWidth="1.500" />
          </Svg>
          <Caret up />
        </button>
        <button aria-label="Previous view" className="pl-[10px]">
          <Svg w={15} h={12}><path d="M1 10l2-7 2 2 8-4 1 2-7 5 2 2Z" fill="#cdd9f5" stroke="#26337c" /></Svg>
        </button>
        <button aria-label="Next view" disabled className="pl-[11px]">
          <Svg w={15} h={12}><path d="M14 1l-2 7-2-2-8 5-1-2 7-5-2-2Z" fill="#eee" stroke="#9a9a9a" /></Svg>
        </button>
        <svg className="absolute right-[2px] bottom-[1px]" width="10" height="10" viewBox="0 0 10 10" aria-hidden="true">
          <path d="M8 0h2v2H8zM4 4h2v2H4zM8 4h2v2H8zM0 8h2v2H0zM4 8h2v2H4zM8 8h2v2H8z" fill="#b4b8be" />
        </svg>
      </div>
    </footer>
  );
}

function DesktopEdge() {
  return (
    <div className="flex w-3 shrink-0 bg-black pl-[1px]">
      <div className="w-[2px] border-r border-[#a7a7a7] bg-[#333]" />
      <div className="w-[4px] bg-black" />
      <div className="flex flex-1 flex-col border-l border-[#c9c9c9]">
        <span className="h-[126px] bg-[#d4560c]" />
        <span className="mt-4 h-[120px] bg-gradient-to-b from-[#14203c] via-[#233f6c] to-[#080c14]" />
      </div>
    </div>
  );
}

export default function App() {
  return (
    <div className="flex h-screen w-full overflow-hidden bg-black font-['Roboto',sans-serif] text-[11px] leading-4 text-[#222]">
      <div className="flex min-w-0 flex-1 flex-col bg-[#e3e7ec]">
        <TitleBar />
        <Ribbon />
        <main className="flex min-h-0 flex-1">
          <aside className="flex w-[193px] shrink-0 flex-col pt-[2px]">
            <StructurePanel />
            <OptionsPanel />
            <PropertiesPanel />
          </aside>
          <div className="flex min-w-0 flex-1 flex-col bg-[#d9dfec] pl-[3px]">
            <div className="flex flex-1 pt-[6px] pr-1 pl-[3px]">
              <Viewport />
            </div>
            <DocumentTabs />
          </div>
        </main>
        <StatusBar />
      </div>
      <DesktopEdge />
    </div>
  );
}
